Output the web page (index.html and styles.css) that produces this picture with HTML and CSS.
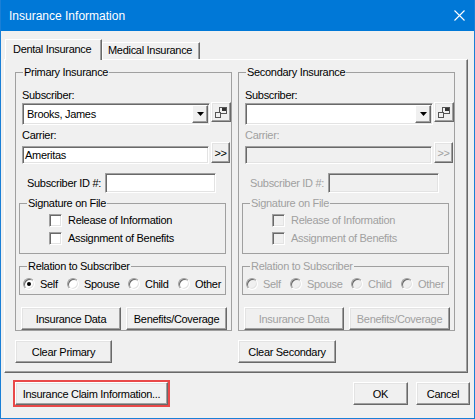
FILE: index.html
```html
<!DOCTYPE html>
<html>
<head>
<meta charset="utf-8">
<link rel="stylesheet" href="styles.css">
</head>
<body>
<div class="window">
  <div class="titlebar">
    <span class="title">Insurance Information</span>
    <svg class="close" width="11" height="11" viewBox="0 0 11 11"><path d="M0.5 0.5 L10.5 10.5 M10.5 0.5 L0.5 10.5" stroke="#fff" stroke-width="1.1" fill="none"/></svg>
  </div>
  <div class="tabs">
    <div class="tab active">Dental Insurance</div>
    <div class="tab">Medical Insurance</div>
  </div>
  <div class="panel">
    <div class="col">
      <fieldset class="group ins">
        <legend>Primary Insurance</legend>
        <div class="lbl sub-lbl">Subscriber:</div>
        <div class="combo-row">
          <div class="combo"><span class="val">Brooks, James</span><span class="drop"><svg width="7" height="4" viewBox="0 0 7 4"><polygon points="0,0 7,0 3.5,4" fill="#000"/></svg></span></div>
          <button class="btn icon-btn"><svg width="14" height="13" viewBox="0 0 14 13"><rect x="5.5" y="1.5" width="7" height="6" fill="none" stroke="#555"/><rect x="8" y="2" width="4" height="3" fill="#333"/><rect x="1.5" y="6.5" width="5" height="5" fill="#f0f0f0" stroke="#555"/></svg></button>
        </div>
        <div class="lbl carrier-lbl">Carrier:</div>
        <div class="carrier-row">
          <div class="field carrier">Ameritas</div>
          <button class="btn more">&gt;&gt;</button>
        </div>
        <div class="id-row">
          <span class="id-lbl">Subscriber ID #:</span>
          <div class="field id"></div>
        </div>
        <fieldset class="group inner sig">
          <legend>Signature on File</legend>
          <div class="chk-row first"><span class="chk"></span><span>Release of Information</span></div>
          <div class="chk-row"><span class="chk"></span><span>Assignment of Benefits</span></div>
        </fieldset>
        <fieldset class="group inner rel">
          <legend>Relation to Subscriber</legend>
          <div class="radios">
            <span class="ri r-self"><span class="radio checked"></span>Self</span>
            <span class="ri r-spouse"><span class="radio"></span>Spouse</span>
            <span class="ri r-child"><span class="radio"></span>Child</span>
            <span class="ri r-other"><span class="radio"></span>Other</span>
          </div>
        </fieldset>
        <div class="btn-row">
          <button class="btn b-data">Insurance Data</button>
          <button class="btn b-ben">Benefits/Coverage</button>
        </div>
      </fieldset>
      <button class="btn clear">Clear Primary</button>
    </div>
    <div class="col">
      <fieldset class="group ins">
        <legend>Secondary Insurance</legend>
        <div class="lbl sub-lbl">Subscriber:</div>
        <div class="combo-row">
          <div class="combo"><span class="val"></span><span class="drop"><svg width="7" height="4" viewBox="0 0 7 4"><polygon points="0,0 7,0 3.5,4" fill="#000"/></svg></span></div>
          <button class="btn icon-btn"><svg width="14" height="13" viewBox="0 0 14 13"><rect x="5.5" y="1.5" width="7" height="6" fill="none" stroke="#555"/><rect x="8" y="2" width="4" height="3" fill="#333"/><rect x="1.5" y="6.5" width="5" height="5" fill="#f0f0f0" stroke="#555"/></svg></button>
        </div>
        <div class="lbl carrier-lbl dis">Carrier:</div>
        <div class="carrier-row">
          <div class="field carrier disabled"></div>
          <button class="btn more dis">&gt;&gt;</button>
        </div>
        <div class="id-row dis">
          <span class="id-lbl">Subscriber ID #:</span>
          <div class="field id disabled"></div>
        </div>
        <fieldset class="group inner sig dis">
          <legend>Signature on File</legend>
          <div class="chk-row first"><span class="chk disabled"></span><span>Release of Information</span></div>
          <div class="chk-row"><span class="chk disabled"></span><span>Assignment of Benefits</span></div>
        </fieldset>
        <fieldset class="group inner rel dis">
          <legend>Relation to Subscriber</legend>
          <div class="radios">
            <span class="ri r-self"><span class="radio disabled"></span>Self</span>
            <span class="ri r-spouse"><span class="radio disabled"></span>Spouse</span>
            <span class="ri r-child"><span class="radio disabled"></span>Child</span>
            <span class="ri r-other"><span class="radio disabled"></span>Other</span>
          </div>
        </fieldset>
        <div class="btn-row">
          <button class="btn b-data dis">Insurance Data</button>
          <button class="btn b-ben dis">Benefits/Coverage</button>
        </div>
      </fieldset>
      <button class="btn clear">Clear Secondary</button>
    </div>
  </div>
  <div class="footer">
    <button class="btn claim">Insurance Claim Information...</button>
    <button class="btn ok">OK</button>
    <button class="btn cancel">Cancel</button>
  </div>
</div>
</body>
</html>
```

FILE: styles.css
```css
* { box-sizing: border-box; }

body {
  margin: 0;
  background: #f0f0f0;
  font-family: "Liberation Sans", Arial, sans-serif;
  font-size: 11px;
  letter-spacing: -0.3px;
  color: #000;
}

.window {
  width: 475px;
  height: 419px;
  border: 1px solid #1a7fd6;
  border-top: none;
  background: #f0f0f0;
  display: flex;
  flex-direction: column;
}

.titlebar {
  height: 31px;
  background: #0078d7;
  color: #fff;
  display: flex;
  align-items: center;
  justify-content: space-between;
  padding: 0 9px 0 8px;
  font-size: 12px;
  letter-spacing: 0;
  flex: none;
}

.close { display: block; }

/* Tabs */
.tabs {
  display: flex;
  align-items: flex-end;
  height: 20px;
  margin: 8px 0 0 4px;
  position: relative;
  z-index: 1;
  flex: none;
}

.tab {
  height: 17px;
  line-height: 15px;
  border: 1px solid;
  border-color: #fff #696969 transparent #fff;
  border-bottom: none;
  box-shadow: inset -1px 0 #a0a0a0;
  background: #f0f0f0;
  padding: 0 0 0 5px;
  width: 98px;
}

.tab.active {
  height: 21px;
  margin-bottom: -1px;
  padding: 2px 0 0 7px;
  width: 97px;
}

/* Panel */
.panel {
  margin: 0 6px 0 3px;
  border: 1px solid;
  border-color: #fff #696969 #696969 #fff;
  box-shadow: inset -1px -1px #a0a0a0;
  padding: 5px 0 9px 10px;
  display: flex;
  gap: 6px;
  flex: none;
}

.col {
  width: 217px;
  display: flex;
  flex-direction: column;
  align-items: flex-start;
}

fieldset.group {
  margin: 0;
  padding: 0;
  min-width: 0;
  border: 1px solid #a0a0a0;
  width: 217px;
}

fieldset.group legend {
  padding: 0 1px;
  margin-left: 7px;
  line-height: 14px;
}

.ins { padding-bottom: 6px; }

.lbl {
  margin-left: 6px;
  line-height: 13px;
}
.sub-lbl { margin-top: 10px; }
.carrier-lbl { margin-top: 4px; }

.dis { color: #a0a0a0; }

/* sunken fields */
.combo, .field, .chk {
  border: 1px solid;
  border-color: #a0a0a0 #fff #fff #a0a0a0;
  box-shadow: inset 1px 1px #696969, inset -1px -1px #e3e3e3;
  background: #fff;
}

.field.disabled, .chk.disabled {
  background: #f0f0f0;
}

.combo-row {
  display: flex;
  align-items: flex-start;
  margin-left: 6px;
}

.combo {
  width: 188px;
  height: 22px;
  margin-top: 1px;
  display: flex;
  align-items: center;
  padding-left: 4px;
}

.combo .val { flex: 1; }

.drop {
  width: 16px;
  height: 18px;
  margin-right: 1px;
  background: #f0f0f0;
  border: 1px solid;
  border-color: #fff #696969 #696969 #fff;
  box-shadow: inset -1px -1px #a0a0a0;
  display: flex;
  align-items: center;
  justify-content: center;
}
.drop svg { display: block; margin-left: 0; }

/* buttons */
.btn {
  font: inherit;
  letter-spacing: inherit;
  color: #000;
  background: #f0f0f0;
  border: 1px solid;
  border-color: #fff #696969 #696969 #fff;
  box-shadow: inset -1px -1px #a0a0a0, inset 1px 1px #e3e3e3;
  padding: 0;
  margin: 0;
  display: flex;
  align-items: center;
  justify-content: center;
  height: 23px;
  flex: none;
}
.btn.dis { color: #a0a0a0; }

.icon-btn {
  width: 20px;
  height: 20px;
  margin-left: 1px;
}
.icon-btn svg { display: block; }

.carrier-row {
  display: flex;
  align-items: flex-end;
  margin-left: 6px;
}

.field.carrier {
  width: 187px;
  height: 18px;
  line-height: 16px;
  padding-left: 2px;
}

.more {
  width: 19px;
  height: 21px;
  margin-left: 2px;
  margin-bottom: 1px;
  letter-spacing: -0.5px;
}

.id-row {
  display: flex;
  align-items: center;
  margin: 9px 0 0 11px;
  height: 20px;
}
.id-lbl { width: 78px; }
.field.id {
  width: 111px;
  height: 20px;
}

.inner {
  width: 207px !important;
  margin-left: 3px !important;
}

.sig { margin-top: 3px !important; padding-bottom: 6px !important; }

.chk-row {
  display: flex;
  align-items: center;
  height: 18px;
  margin-left: 29px;
  gap: 6px;
}
.chk-row.first { margin-top: 1px; }

.chk {
  width: 13px;
  height: 13px;
  flex: none;
}

.rel { margin-top: 5px !important; padding-bottom: 2px !important; }

.radios {
  display: flex;
  align-items: center;
  height: 16px;
  margin-top: 3px;
  padding-left: 3px;
}

.ri {
  display: flex;
  align-items: center;
  gap: 5px;
}
.r-self { width: 44px; }
.r-spouse { width: 61px; }
.r-child { width: 50px; }

.radio {
  width: 12px;
  height: 12px;
  border-radius: 50%;
  border: 1px solid;
  border-color: #a0a0a0 #fff #fff #a0a0a0;
  box-shadow: inset 1px 1px #696969, inset -1px -1px #e3e3e3;
  background: #fff;
  flex: none;
  display: flex;
  align-items: center;
  justify-content: center;
}
.radio.disabled { background: #f0f0f0; }
.radio.checked::after {
  content: "";
  width: 4px;
  height: 4px;
  border-radius: 50%;
  background: #000;
}

.btn-row {
  display: flex;
  gap: 5px;
  margin: 12px 0 0 5px;
}
.b-data { width: 100px; }
.b-ben { width: 101px; }

.clear {
  margin-top: 9px;
  width: 97px;
}
.col:last-child .clear { width: 98px; }

/* footer */
.footer {
  display: flex;
  padding: 9px 4px 0 14px;
  flex: none;
}
.claim {
  width: 153px;
  outline: 2px solid #e94848;
}
.ok {
  width: 55px;
  margin-left: auto;
}
.cancel {
  width: 54px;
  margin-left: 8px;
}
```
